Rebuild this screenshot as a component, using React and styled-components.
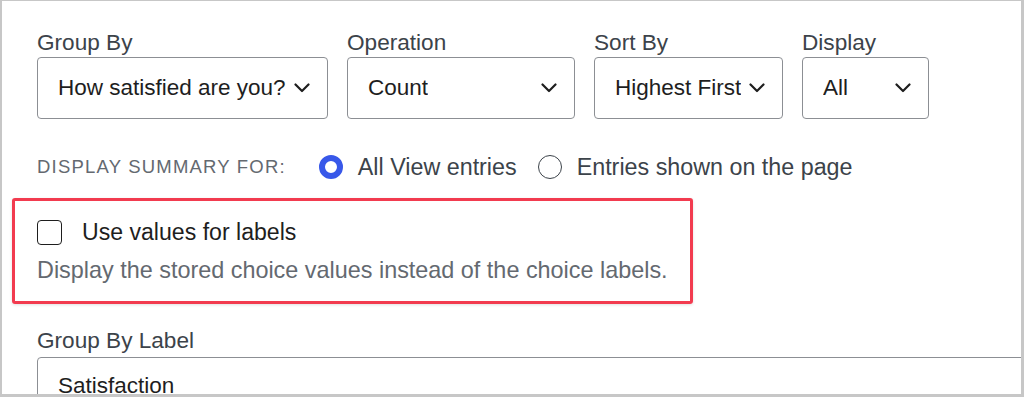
import React from "react";
import styled, { createGlobalStyle } from "styled-components";

const GlobalStyle = createGlobalStyle`
  html, body {
    margin: 0;
    padding: 0;
    background: #ffffff;
  }
  * {
    box-sizing: border-box;
  }
`;

const Frame = styled.div`
  width: 1024px;
  height: 397px;
  border: 2px solid #c7c7c7;
  border-right-width: 3px;
  border-bottom-width: 3px;
  border-top-width: 1px;
  overflow: hidden;
  padding: 28px 0 0 35px;
  font-family: "Liberation Sans", Arial, sans-serif;
  color: #3c434a;
`;

const FieldRow = styled.div`
  display: flex;
  gap: 19px;
`;

const Field = styled.div`
  display: flex;
  flex-direction: column;
`;

const Label = styled.label`
  font-size: 22.6px;
  line-height: 27px;
  color: #3c434a;
  margin-bottom: 1px;
`;

const Select = styled.div`
  width: ${(p) => p.$width}px;
  height: 62px;
  border: 1px solid #8c8f94;
  border-radius: 4px;
  display: flex;
  align-items: center;
  justify-content: space-between;
  gap: 6px;
  padding: 0 17px 0 20px;
  font-size: 22.5px;
  color: #1e1e1e;
  background: #fff;

  span {
    white-space: nowrap;
    overflow: hidden;
  }

  svg {
    flex: none;
  }
`;

const SummaryRow = styled.div`
  display: flex;
  align-items: center;
  height: 28px;
  margin-top: 34px;
`;

const SummaryTitle = styled.span`
  font-size: 18.5px;
  letter-spacing: 1.2px;
  color: #646970;
  margin-right: 33px;
`;

const RadioOption = styled.label`
  display: flex;
  align-items: center;
  gap: 15px;
  font-size: 23.3px;
  color: #3c434a;
  margin-right: 21px;
`;

const RadioDot = styled.span`
  width: 24px;
  height: 24px;
  border-radius: 50%;
  flex: none;
  border: ${(p) => (p.$checked ? "6.5px solid #3858e9" : "1.5px solid #3c434a")};
  background: #fff;
`;

const Highlight = styled.div`
  width: 681px;
  margin: 17px 0 0 -25px;
  padding: 17px 20px 17px 22px;
  border: 3px solid #f23b4f;
  border-radius: 3px;
  box-shadow: 0 1px 3px rgba(0, 0, 0, 0.12);
`;

const CheckRow = styled.label`
  display: flex;
  align-items: center;
  gap: 20px;
  height: 28px;
  font-size: 23.1px;
  color: #1e1e1e;
`;

const CheckBox = styled.span`
  width: 25px;
  height: 25px;
  flex: none;
  border: 1.5px solid #1e1e1e;
  border-radius: 4px;
  background: #fff;
`;

const Hint = styled.p`
  margin: 11px 0 0;
  font-size: 23.4px;
  line-height: 27px;
  color: #646970;
`;

const LabelField = styled.div`
  display: flex;
  flex-direction: column;
  margin-top: 23px;
`;

const TextInput = styled.div`
  width: 1010px;
  height: 62px;
  border: 1px solid #8c8f94;
  border-radius: 4px;
  padding: 19px 20px 0;
  margin-top: 2px;
  font-size: 22.5px;
  line-height: 18px;
  color: #1e1e1e;
`;

const Chevron = () => (
  <svg width="16" height="10" viewBox="0 0 16 10" fill="none">
    <polyline
      points="1.5,1.5 8,8 14.5,1.5"
      stroke="#1e1e1e"
      strokeWidth="2.2"
      strokeLinecap="round"
      strokeLinejoin="round"
    />
  </svg>
);

const selects = [
  { label: "Group By", value: "How satisfied are you?", width: 291 },
  { label: "Operation", value: "Count", width: 228 },
  { label: "Sort By", value: "Highest First", width: 189 },
  { label: "Display", value: "All", width: 127 },
];

export default function App() {
  return (
    <>
      <GlobalStyle />
      <Frame>
        <FieldRow>
          {selects.map((s) => (
            <Field key={s.label}>
              <Label>{s.label}</Label>
              <Select $width={s.width}>
                <span>{s.value}</span>
                <Chevron />
              </Select>
            </Field>
          ))}
        </FieldRow>

        <SummaryRow>
          <SummaryTitle>DISPLAY SUMMARY FOR:</SummaryTitle>
          <RadioOption>
            <RadioDot $checked />
            All View entries
          </RadioOption>
          <RadioOption>
            <RadioDot />
            Entries shown on the page
          </RadioOption>
        </SummaryRow>

        <Highlight>
          <CheckRow>
            <CheckBox />
            Use values for labels
          </CheckRow>
          <Hint>Display the stored choice values instead of the choice labels.</Hint>
        </Highlight>

        <LabelField>
          <Label>Group By Label</Label>
          <TextInput>Satisfaction</TextInput>
        </LabelField>
      </Frame>
    </>
  );
}
